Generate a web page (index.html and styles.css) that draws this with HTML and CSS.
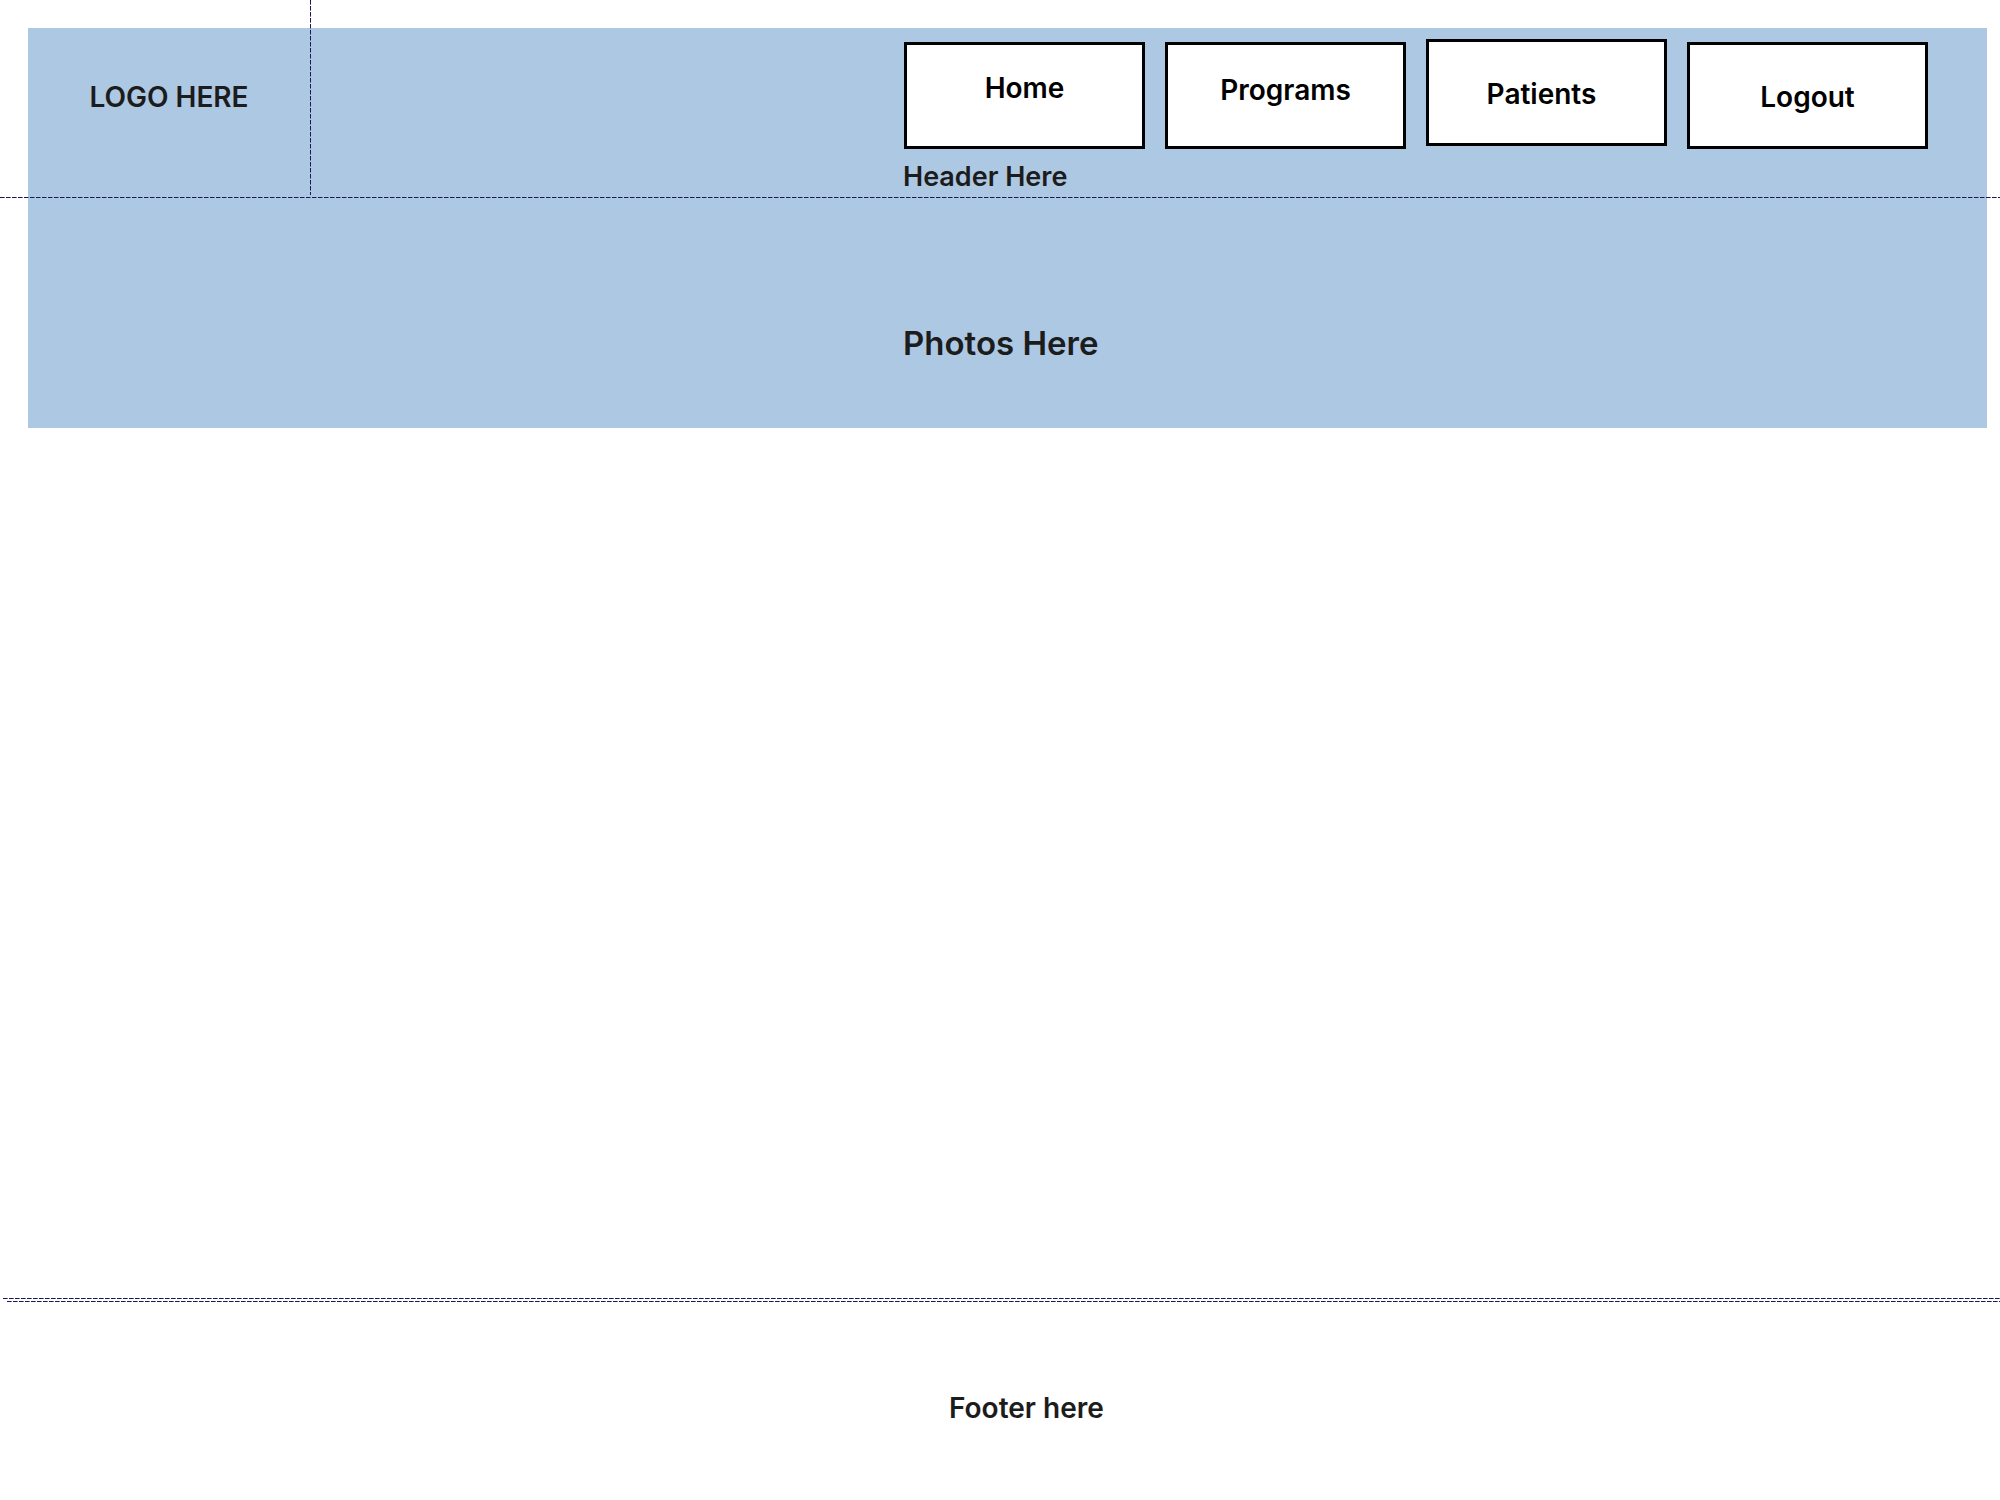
FILE: index.html
```html
<!DOCTYPE html>
<html lang="en">
<head>
<meta charset="utf-8">
<title>Wireframe</title>
<link rel="stylesheet" href="styles.css">
</head>
<body>
<div class="page">
  <div class="top">
    <div class="band">
      <header class="header">
        <div class="logo">LOGO HERE</div>
        <div class="nav-area">
          <div class="nav-group">
            <nav class="nav">
              <a class="nav-btn nav-home">Home</a>
              <a class="nav-btn nav-programs">Programs</a>
              <a class="nav-btn nav-patients">Patients</a>
              <a class="nav-btn nav-logout">Logout</a>
            </nav>
            <div class="header-label">Header Here</div>
          </div>
        </div>
      </header>
      <section class="photos">Photos Here</section>
    </div>
  </div>
  <main class="main"></main>
  <footer class="footer">
    <div class="footer-line line-a"></div>
    <div class="footer-line line-b"></div>
    <div class="footer-text">Footer here</div>
  </footer>
  <div class="guide-v"></div>
  <div class="guide-h"></div>
</div>
</body>
</html>
```

FILE: styles.css
```css
html, body {
  margin: 0;
  padding: 0;
  background: #ffffff;
}

body {
  font-family: Inter, "Noto Sans", "Liberation Sans", sans-serif;
  color: #1c1c1c;
}

.page {
  position: relative;
  width: 2000px;
  min-height: 1500px;
}

.top {
  padding: 28px 13px 0 28px;
}

.band {
  background: #adc8e3;
}

.header {
  display: flex;
  height: 169px;
}

.logo {
  width: 282px;
  padding-top: 52px;
  text-align: center;
  font-size: 28px;
  line-height: 34px;
  font-weight: 600;
  color: #1c1c1c;
  box-sizing: border-box;
}

.nav-area {
  flex: 1;
  display: flex;
  justify-content: flex-end;
  padding-right: 58px;
}

.nav-group {
  width: 1025px;
}

.nav {
  display: flex;
  align-items: flex-start;
  gap: 20px;
  margin-top: 14px;
}

.nav-btn {
  display: block;
  width: 241px;
  height: 107px;
  box-sizing: border-box;
  border: 3px solid #000;
  background: #fff;
  text-align: center;
  font-size: 28px;
  line-height: 34px;
  font-weight: 600;
  color: #000;
}

.nav-home { padding-top: 26px; }
.nav-programs { padding-top: 28px; }
.nav-patients { padding-top: 35px; padding-right: 10px; margin-top: -3px; }
.nav-logout { padding-top: 35px; }

.header-label {
  margin-top: 11px;
  margin-left: -1px;
  font-size: 27px;
  line-height: 33px;
  font-weight: 600;
  color: #1c1c1c;
}

.photos {
  height: 231px;
  box-sizing: border-box;
  padding: 126px 0 0 875px;
  font-size: 33px;
  line-height: 40px;
  font-weight: 600;
  color: #1c1c1c;
}

.main {
  height: 870px;
}

.footer-line {
  height: 1px;
  background: repeating-linear-gradient(90deg, #1a1a4a 0 4px, #6a6ab0 4px 5px, transparent 5px 6px);
}

.line-a {
  margin-left: 3px;
}

.line-b {
  margin-top: 2px;
  margin-left: 7px;
}

.footer-text {
  padding: 89px 0 0 949px;
  font-size: 28px;
  line-height: 34px;
  font-weight: 600;
  color: #1c1c1c;
}

.guide-v {
  position: absolute;
  left: 310px;
  top: 0;
  width: 1px;
  height: 195px;
  background: repeating-linear-gradient(180deg, #1a1a4a 0 4px, #6a6ab0 4px 5px, transparent 5px 6px);
}

.guide-h {
  position: absolute;
  left: 0;
  right: 0;
  top: 197px;
  height: 1px;
  background: repeating-linear-gradient(90deg, #1a1a4a 0 4px, #6a6ab0 4px 5px, transparent 5px 6px);
}
```
